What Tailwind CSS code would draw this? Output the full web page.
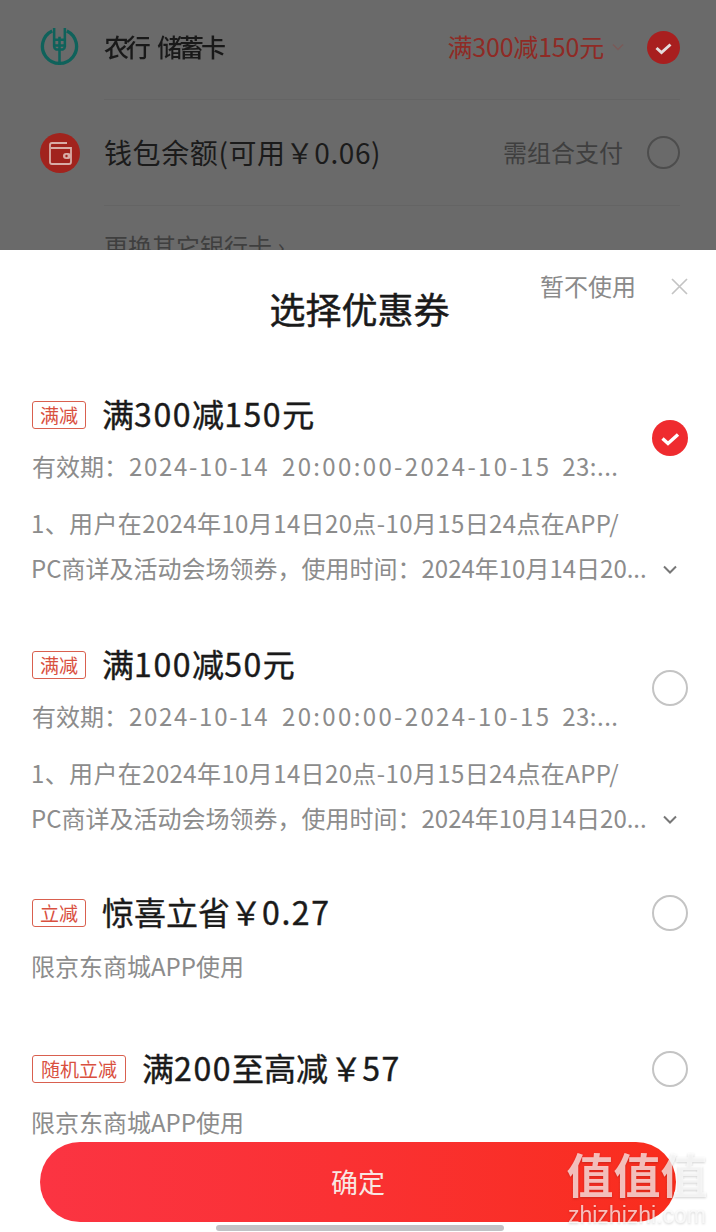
<!DOCTYPE html>
<html lang="zh">
<head>
    <meta charset="UTF-8">
    <title>选择优惠券</title>
    <script src="https://cdn.jsdelivr.net/npm/@tailwindcss/browser@4"></script>
</head>
<body class="w-[716px] h-[1232px] overflow-hidden bg-white font-['Noto_Sans_CJK_SC',sans-serif]">
    <div class="relative w-[716px] h-[1232px] overflow-hidden">
        <!-- page behind the sheet -->
        <div class="h-[250px] overflow-hidden bg-[#6a6a6a] pl-[40px] pr-[36px]">
            <div class="flex">
                <svg class="w-[39px] h-[39px] mt-[27px] shrink-0" viewBox="0 0 40 40" fill="none" stroke="#0f625b">
                    <path stroke-width="3.4" d="M12.5 4a17.5 17.5 0 1 0 15 0"/>
                    <path stroke-width="2.6" d="M14.5 1v19q0 2 2 3h7q2-1 2-3V1"/>
                    <path stroke-width="2.6" d="M20 10v29M14 13h12M14 19h12"/>
                </svg>
                <div class="flex items-center flex-1 h-[100px] ml-[25px] pb-[6px] border-b border-[#646464]">
                    <span class="text-[25px] text-[#191919] font-medium tracking-[-3.2px] blur-[0.7px] whitespace-nowrap">农行&nbsp;&nbsp;&nbsp;&nbsp;储蓄卡</span>
                    <span class="ml-auto text-[25px] text-[#8f2a25] leading-[36px] -mt-[2px] tracking-[-0.2px]">满300减150元</span>
                    <svg class="w-[12px] h-[8px] ml-[8px]" viewBox="0 0 12 8" fill="none" stroke="#7a5a58" stroke-width="1.5"><path d="M1 1.5l5 5 5-5"/></svg>
                    <svg class="w-[33px] h-[33px] ml-[23px] mt-[2px]" viewBox="0 0 33 33"><circle cx="16.500" cy="16.500" r="16.500" fill="#a81f1f"/><path d="M9.500 17l5 4.500 9-8" fill="none" stroke="#e4dede" stroke-width="3"/></svg>
                </div>
            </div>
            <div class="flex">
                <svg class="w-[40px] h-[40px] mt-[33px] shrink-0" viewBox="0 0 40 40"><circle cx="20" cy="20" r="20" fill="#a1231d"/><path d="M27 10H12q-2 0-2 2v17q0 2 2 2h17q2 0 2-2V15H11" fill="none" stroke="#d8aca6" stroke-width="1.800"/><rect x="23" y="20" width="8" height="6" rx="3" fill="#d8aca6"/><circle cx="26.500" cy="23" r="1.200" fill="#a1231d"/></svg>
                <div class="flex items-center flex-1 h-[106px] ml-[24px] pb-[2px] border-b border-[#646464]">
                    <span class="text-[28px] text-[#1b1b1b] tracking-[0.6px] whitespace-nowrap">钱包余额(可用￥0.06)</span>
                    <span class="ml-auto text-[24px] text-[#3f3f3f]">需组合支付</span>
                    <span class="ml-[24px] mt-[2px] w-[33px] h-[33px] rounded-full border-2 border-[#4d4d4d]"></span>
                </div>
            </div>
            <div class="ml-[64px] pt-[24px] text-[24px] leading-[32px] text-[#3f3f3f] whitespace-nowrap">更换其它银行卡 ›</div>
        </div>

        <!-- coupon sheet -->
        <div class="h-[982px] overflow-hidden bg-white">
            <div class="relative h-[139px]">
                <h1 class="pt-[32px] pl-[3px] text-center text-[36px] leading-[52px] [-webkit-text-stroke:0.5px_#1a1a1a] text-[#1a1a1a]">选择优惠券</h1>
                <span class="absolute left-[540px] top-[18px] text-[24px] leading-[36px] text-[#8a8a8a]">暂不使用</span>
                <svg class="absolute left-[671px] top-[28px] w-[17px] h-[17px]" viewBox="0 0 17 17" fill="none" stroke="#c4c4c4" stroke-width="1.700"><path d="M1 1l15 15M16 1L1 16"/></svg>
            </div>

            <div class="px-[32px]">
                <!-- 满300减150元 -->
                <div class="relative h-[250px]">
                    <div class="flex items-center h-[52px]">
                        <span class="w-[54px] h-[28px] rounded-[3px] border border-[#d9604f] text-center text-[19px] leading-[25px] text-[#d9503f]">满减</span>
                        <span class="ml-[16px] text-[32px] leading-[48px] -mt-[4px] [-webkit-text-stroke:0.4px_#1a1a1a] text-[#1a1a1a] whitespace-nowrap">满<span class="tracking-[1.6px]">300</span>减<span class="tracking-[1.6px]">150</span>元</span>
                    </div>
                    <div class="h-[52px] text-[24px] leading-[50px] text-[#8c8c8c] whitespace-nowrap">有效期：<span class="ml-[1px] tracking-[1.7px]">2024-10-14</span>&nbsp;&nbsp;<span class="ml-[2px] tracking-[2.35px]">20:00:00-2024-10-15</span>&nbsp;&nbsp;<span class="tracking-[0.5px]">23:...</span></div>
                    <div class="mt-[9px] -ml-[1px] h-[45px] text-[24px] leading-[41px] tracking-[0.38px] text-[#8c8c8c] whitespace-nowrap">1、用户在2024年10月14日20点-10月15日24点在APP/</div>
                    <div class="flex items-start -ml-[1px] h-[45px] text-[24px] leading-[41px] text-[#8c8c8c] whitespace-nowrap">PC商详及活动会场领券，使用时间：2024年10月14日20...
                        <svg class="ml-auto mr-[7px] mt-[18px] w-[14px] h-[9px]" viewBox="0 0 14 9" fill="none" stroke="#777" stroke-width="2"><path d="M1 1.500l6 6 6-6"/></svg>
                    </div>
                    <svg class="absolute right-[-4px] top-[31px] w-[36px] h-[36px]" viewBox="0 0 36 36"><circle cx="18" cy="18" r="18" fill="#ef2b2f"/><path d="M10.500 18.500l5.500 5 10-9" fill="none" stroke="#fff" stroke-width="3.400"/></svg>
                </div>

                <!-- 满100减50元 -->
                <div class="relative h-[248px]">
                    <div class="flex items-center h-[52px]">
                        <span class="w-[54px] h-[28px] rounded-[3px] border border-[#d9604f] text-center text-[19px] leading-[25px] text-[#d9503f]">满减</span>
                        <span class="ml-[16px] text-[32px] leading-[48px] -mt-[4px] [-webkit-text-stroke:0.4px_#1a1a1a] text-[#1a1a1a] whitespace-nowrap">满<span class="tracking-[1.6px]">100</span>减<span class="tracking-[1.6px]">50</span>元</span>
                    </div>
                    <div class="h-[52px] text-[24px] leading-[50px] text-[#8c8c8c] whitespace-nowrap">有效期：<span class="ml-[1px] tracking-[1.7px]">2024-10-14</span>&nbsp;&nbsp;<span class="ml-[2px] tracking-[2.35px]">20:00:00-2024-10-15</span>&nbsp;&nbsp;<span class="tracking-[0.5px]">23:...</span></div>
                    <div class="mt-[9px] -ml-[1px] h-[45px] text-[24px] leading-[41px] tracking-[0.38px] text-[#8c8c8c] whitespace-nowrap">1、用户在2024年10月14日20点-10月15日24点在APP/</div>
                    <div class="flex items-start -ml-[1px] h-[45px] text-[24px] leading-[41px] text-[#8c8c8c] whitespace-nowrap">PC商详及活动会场领券，使用时间：2024年10月14日20...
                        <svg class="ml-auto mr-[7px] mt-[18px] w-[14px] h-[9px]" viewBox="0 0 14 9" fill="none" stroke="#777" stroke-width="2"><path d="M1 1.500l6 6 6-6"/></svg>
                    </div>
                    <span class="absolute right-[-4px] top-[31px] w-[36px] h-[36px] rounded-full border-2 border-[#c4c4c4]"></span>
                </div>

                <!-- 惊喜立省 -->
                <div class="relative h-[156px]">
                    <div class="flex items-center h-[52px]">
                        <span class="w-[54px] h-[28px] rounded-[3px] border border-[#d9604f] text-center text-[19px] leading-[25px] text-[#d9503f]">立减</span>
                        <span class="ml-[16px] text-[32px] leading-[48px] -mt-[4px] [-webkit-text-stroke:0.4px_#1a1a1a] text-[#1a1a1a] whitespace-nowrap">惊喜立省￥<span class="tracking-[1.6px]">0.27</span></span>
                    </div>
                    <div class="-ml-[1px] h-[54px] text-[24px] leading-[54px] text-[#8c8c8c]">限京东商城APP使用</div>
                    <span class="absolute right-[-4px] top-[8px] w-[36px] h-[36px] rounded-full border-2 border-[#c4c4c4]"></span>
                </div>

                <!-- 满200至高减 -->
                <div class="relative">
                    <div class="flex items-center h-[52px]">
                        <span class="w-[94px] h-[28px] rounded-[3px] border border-[#d9604f] text-center text-[19px] leading-[25px] text-[#d9503f]">随机立减</span>
                        <span class="ml-[16px] text-[32px] leading-[48px] -mt-[4px] [-webkit-text-stroke:0.4px_#1a1a1a] text-[#1a1a1a] whitespace-nowrap">满<span class="tracking-[1.6px]">200</span>至高减<span class="ml-[2px]">￥</span><span class="tracking-[1.6px]">57</span></span>
                    </div>
                    <div class="-ml-[1px] h-[54px] text-[24px] leading-[54px] text-[#8c8c8c]">限京东商城APP使用</div>
                    <span class="absolute right-[-4px] top-[8px] w-[36px] h-[36px] rounded-full border-2 border-[#c4c4c4]"></span>
                </div>
            </div>
        </div>

        <!-- floats over the list -->
        <button class="absolute left-[40px] top-[1142px] w-[636px] h-[80px] rounded-full bg-linear-to-r from-[#fb3442] to-[#f92d1c] text-[27px] text-[#f8e6e2]">确定</button>
        <div class="absolute left-[216px] top-[1225px] w-[288px] h-[6px] rounded-full bg-[#c2c2c6]"></div>

        <!-- watermark -->
        <div class="absolute left-[562px] top-[1143px] w-[150px] text-center text-white/70 drop-shadow-[0_1px_1px_rgba(0,0,0,0.25)]">
            <div class="text-[47px] leading-[60px] font-bold whitespace-nowrap">值值值</div>
            <div class="text-[23px] leading-[25px] font-['Liberation_Sans',sans-serif] whitespace-nowrap">zhizhizhi.com</div>
        </div>
    </div>
</body>
</html>
